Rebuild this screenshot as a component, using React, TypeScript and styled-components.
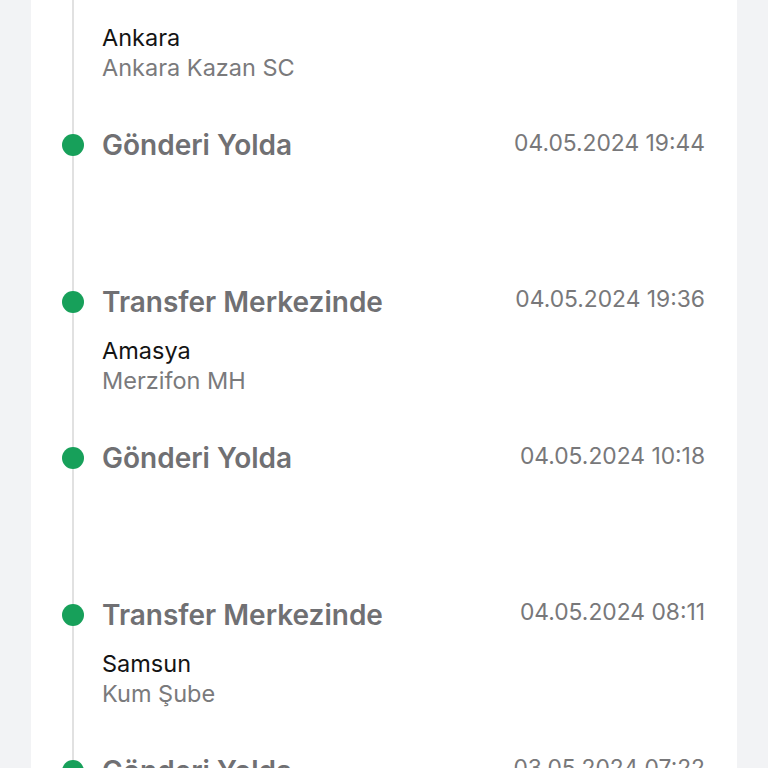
import React, { FC } from 'react';
import styled, { createGlobalStyle } from 'styled-components';

type Step = {
  title: string;
  date: string;
  city?: string;
  branch?: string;
};

const steps: Step[] = [
  { title: 'Transfer Merkezinde', date: '05.05.2024 01:12', city: 'Ankara', branch: 'Ankara Kazan SC' },
  { title: 'Gönderi Yolda', date: '04.05.2024 19:44' },
  { title: 'Transfer Merkezinde', date: '04.05.2024 19:36', city: 'Amasya', branch: 'Merzifon MH' },
  { title: 'Gönderi Yolda', date: '04.05.2024 10:18' },
  { title: 'Transfer Merkezinde', date: '04.05.2024 08:11', city: 'Samsun', branch: 'Kum Şube' },
  { title: 'Gönderi Yolda', date: '03.05.2024 07:22' },
];

const App: FC = () => {
  return (
    <Page>
      <GlobalStyle />
      <Card>
        <Timeline>
          {steps.map((step, i) => (
            <Item key={i}>
              <DotCell>
                <Dot />
              </DotCell>
              <Body>
                <TitleRow>
                  <Title>{step.title}</Title>
                  <Date>{step.date}</Date>
                </TitleRow>
                <Location>
                  <City>{step.city}</City>
                  <Branch>{step.branch}</Branch>
                </Location>
              </Body>
            </Item>
          ))}
        </Timeline>
      </Card>
    </Page>
  );
};

export default App;

const GlobalStyle = createGlobalStyle`
  body {
    margin: 0;
    background: #f2f3f5;
    font-family: Inter, 'Noto Sans', sans-serif;
    overflow: hidden;
  }
`;

const Page = styled.div`
  width: 768px;
  height: 768px;
  overflow: hidden;
`;

const Card = styled.div`
  margin: -28px 31px 0;
  background: #ffffff;
`;

const Timeline = styled.div`
  display: flex;
  flex-direction: column;
  background: linear-gradient(#e1e1e1, #e1e1e1) no-repeat 41px 0 / 2px 100%;
`;

const Item = styled.div`
  display: grid;
  grid-template-columns: 71px 1fr;
  height: 156.4px;
`;

const DotCell = styled.div`
  height: 34px;
  display: flex;
  align-items: center;
  padding-left: 31px;
`;

const Dot = styled.span`
  width: 22px;
  height: 22px;
  border-radius: 50%;
  background: #17a05a;
`;

const Body = styled.div`
  display: flex;
  flex-direction: column;
  padding-right: 32px;
`;

const TitleRow = styled.div`
  display: flex;
  justify-content: space-between;
  align-items: center;
  height: 34px;
`;

const Title = styled.div`
  font-size: 28px;
  font-weight: 600;
  color: #707073;
`;

const Date = styled.div`
  font-size: 22.8px;
  color: #78787a;
  margin-bottom: 6px;
`;

const Location = styled.div`
  display: flex;
  flex-direction: column;
  padding-top: 17px;
`;

const City = styled.div`
  height: 30px;
  line-height: 30px;
  font-size: 23.5px;
  color: #141414;
`;

const Branch = styled.div`
  height: 30px;
  line-height: 30px;
  font-size: 23.5px;
  color: #7a7a7c;
`;
